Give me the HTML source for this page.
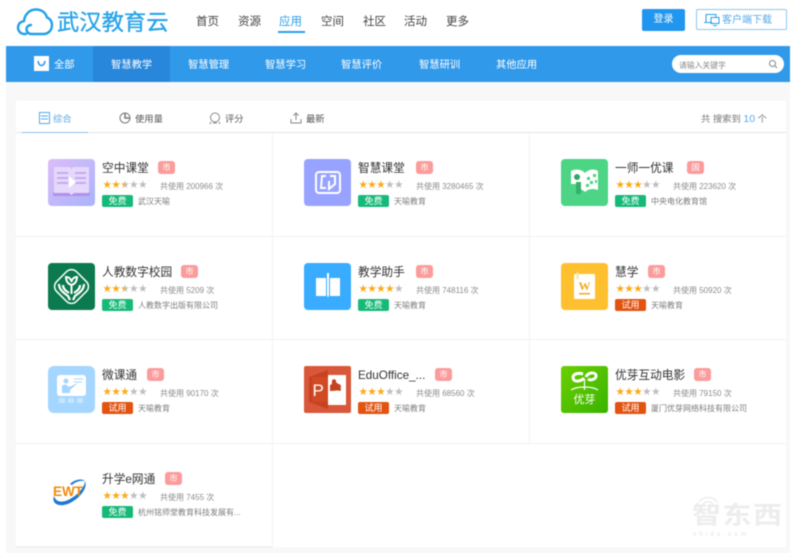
<!DOCTYPE html>
<html lang="zh"><head><meta charset="utf-8"><title>武汉教育云</title>
<style>
*{box-sizing:border-box}
html,body{margin:0;padding:0;width:800px;height:553px;overflow:hidden;background:#fff}
body{font-family:"Liberation Sans","Noto Sans CJK SC",sans-serif}
#w{position:absolute;left:0;top:0;width:800px;height:553px;overflow:hidden;filter:blur(.5px)}
.a{position:absolute;white-space:nowrap}
.n{top:15px;font-size:11.5px;line-height:15px;color:#444}
.b{top:58px;font-size:10.3px;line-height:15px;color:#fff}
.t{top:112px;font-size:9.3px;line-height:14px;color:#555}
.c{position:absolute;width:220px;height:50px}
.i{position:absolute;left:0;top:0;width:47px;height:47px;border-radius:4px;overflow:hidden}
.h{position:absolute;left:54px;top:2px;font-size:11.7px;line-height:16px;color:#333;white-space:nowrap}
.g{position:absolute;top:2px;width:17px;height:13px;border-radius:3px;background:#fb9c9c;color:#fff;font-size:8px;line-height:13px;text-align:center}
.s{position:absolute;left:54.500px;top:21px;font-size:10.500px;line-height:11px;width:50px;height:11px;white-space:nowrap}
.s i{display:inline-block;width:8.900px;font-style:normal;color:#bdbdbd;font-family:"DejaVu Sans",sans-serif;text-align:center}
.s i.o{color:#fba914}
.s i.q{background:linear-gradient(90deg,#fba914 50%,#bdbdbd 50%);-webkit-background-clip:text;background-clip:text;color:transparent}
.u{position:absolute;left:112px;top:22px;font-size:8px;line-height:11px;color:#8c8c8c;white-space:nowrap}
.p{position:absolute;left:54px;top:36px;width:31px;height:12px;border-radius:2px;background:#17b978;color:#fff;font-size:9px;line-height:12px;text-align:center}
.p.r{background:#e2530f}
.m{position:absolute;left:90px;top:37px;font-size:8px;line-height:11px;color:#7c7c7c;white-space:nowrap}
svg{display:block}
</style></head><body><div id="w">

<!-- header -->
<svg class="a" style="left:16px;top:7px" width="38" height="29" viewBox="0 0 38 29"><path d="M10 27H8.500C4.500 27 2 24 2 20.500S4.500 14.500 8 14.200C8.500 7.500 13.500 2.500 20 2.500C25.500 2.500 29.500 5.500 31 10.500C34 11.500 36 14.500 36 18C36 23 32.500 27 27.500 27H15.500C12.500 27 10.500 24.800 10.500 22.300S12.500 18 15 18" fill="none" stroke="#21a1e8" stroke-width="2.400" stroke-linecap="round" stroke-linejoin="round"/></svg>
<div class="a" style="left:57px;top:10px;font-size:22.300px;line-height:26px;color:#27a4e8;-webkit-text-stroke:.35px #27a4e8">武汉教育云</div>
<div class="a n" style="left:196px">首页</div><div class="a n" style="left:238px">资源</div>
<div class="a n" style="left:279px;color:#2b9ee8">应用</div><div class="a" style="left:278px;top:31px;width:27px;height:2px;background:#2b9ee8"></div>
<div class="a n" style="left:321px">空间</div><div class="a n" style="left:363px">社区</div>
<div class="a n" style="left:404px">活动</div><div class="a n" style="left:446px">更多</div>
<div class="a" style="left:642px;top:9px;width:43px;height:22px;background:#2196ee;border-radius:2px;color:#fff;font-size:10px;line-height:22px;text-align:center">登录</div>
<div class="a" style="left:696px;top:9px;width:91px;height:21px;border:1px solid #8fc7f2;border-radius:2px"></div>
<svg class="a" style="left:703px;top:13px" width="17" height="13" viewBox="0 0 17 13" fill="none" stroke="#2b9ee8" stroke-width="1"><path d="M3 9V1.500H13V4M1 9.500H9M8 4.500H16V10.500H8ZM10 12.500H14"/></svg>
<div class="a" style="left:722px;top:14px;font-size:10px;line-height:14px;color:#5aa9e6">客户端下载</div>

<!-- grey bg + blue bar -->
<div class="a" style="left:6px;top:82px;width:784px;height:471px;background:#f8f8f8"></div>
<div class="a" style="left:6px;top:46px;width:784px;height:36px;background:#3199ea"></div>
<div class="a" style="left:93px;top:46px;width:77px;height:36px;background:#2887db"></div>
<svg class="a" style="left:34px;top:56px" width="15" height="15" viewBox="0 0 15 15"><rect width="15" height="15" fill="#fff"/><path d="M4 5C4.500 8 6 9.500 7.500 9.500S10.500 8 11 5" fill="none" stroke="#3199ea" stroke-width="1.600"/></svg>
<div class="a b" style="left:54px">全部</div><div class="a b" style="left:111px">智慧教学</div>
<div class="a b" style="left:188px">智慧管理</div><div class="a b" style="left:265px">智慧学习</div>
<div class="a b" style="left:341px">智慧评价</div><div class="a b" style="left:419px">智慧研训</div>
<div class="a b" style="left:496px">其他应用</div>
<div class="a" style="left:672px;top:55px;width:112px;height:18px;background:#fff;border-radius:9px"></div>
<div class="a" style="left:679px;top:60px;font-size:7.800px;line-height:11px;color:#888">请输入关键字</div>
<svg class="a" style="left:768px;top:59px" width="10" height="10" viewBox="0 0 10 10" fill="none" stroke="#888" stroke-width="1"><circle cx="4.500" cy="4.500" r="3"/><path d="M7 7L9 9"/></svg>

<!-- main panel -->
<div class="a" style="left:16px;top:101px;width:770px;height:446px;background:#fff"></div>
<div class="a" style="left:16px;top:132px;width:770px;height:1px;background:#e4e4e4"></div>
<div class="a" style="left:22px;top:132px;width:66px;height:1px;background:#8cc0ea"></div>
<svg class="a" style="left:39px;top:112px" width="11" height="12" viewBox="0 0 11 12" fill="none" stroke="#5aa9e6"><rect x=".5" y=".5" width="10" height="11"/><path d="M2 4H9M2 7H9"/></svg>
<div class="a t" style="left:53px;color:#5aa9e6">综合</div>
<svg class="a" style="left:119px;top:112px" width="12" height="12" viewBox="0 0 12 12" fill="none" stroke="#777"><circle cx="6" cy="6" r="5"/><path d="M6 1V6H11" stroke-width="1.500"/></svg>
<div class="a t" style="left:135px">使用量</div>
<svg class="a" style="left:209px;top:112px" width="12" height="13" viewBox="0 0 12 13" fill="none" stroke="#888"><circle cx="6" cy="5.500" r="4.500"/><path d="M2 10L1 12M10 10L11 12M4 11H8"/></svg>
<div class="a t" style="left:225px">评分</div>
<svg class="a" style="left:290px;top:112px" width="12" height="12" viewBox="0 0 12 12" fill="none" stroke="#888"><path d="M1 7V11H11V7M6 8V1M3.500 3.500L6 1L8.500 3.500"/></svg>
<div class="a t" style="left:306px">最新</div>
<div class="a t" style="left:701px;color:#777">共 搜索到 <span style="color:#5aa9e6;font-size:10.500px">10</span> 个</div>

<!-- grid lines -->
<div class="a" style="left:16px;top:236px;width:770px;height:1px;background:#f1f1f1"></div>
<div class="a" style="left:16px;top:339px;width:770px;height:1px;background:#f1f1f1"></div>
<div class="a" style="left:16px;top:443px;width:770px;height:1px;background:#f1f1f1"></div>
<div class="a" style="left:16px;top:546px;width:256px;height:2px;background:#f0f0f0"></div>
<div class="a" style="left:272px;top:133px;width:1px;height:414px;background:#f3f3f3"></div>
<div class="a" style="left:529px;top:133px;width:1px;height:311px;background:#f3f3f3"></div>

<!-- Row 1 -->
<div class="c" style="left:48px;top:159px">
<div class="i" style="background:linear-gradient(135deg,#dcbdf8,#a8b4fa)"><svg width="47" height="47" viewBox="0 0 47 47"><path d="M5 37H42V33H5Z" fill="#b190ee"/><path d="M6 8H22L23.500 10L25 8H41V34H26L23.500 36L21 34H6Z" fill="#e6d8fb"/><path d="M9 14H20M9 19H20M9 24H20M27 14H38M27 19H38M27 24H38" stroke="#c3aaf2" stroke-width="2"/><path d="M21 17L28 23L21 29Z" fill="#fff"/></svg></div>
<div class="h">空中课堂</div><div class="g" style="left:110px">市</div>
<div class="s"><i class="o">★</i><i class="o">★</i><i class="q">★</i><i>★</i><i>★</i></div>
<div class="u">共使用 200966 次</div><div class="p">免费</div><div class="m">武汉天喻</div></div>

<div class="c" style="left:304px;top:159px">
<div class="i" style="background:#98a3ff"><svg width="47" height="47" viewBox="0 0 47 47" fill="none" stroke="#fff" stroke-width="2"><rect x="12" y="13" width="24" height="21" rx="3"/><path d="M22 17H18L17 29H22M26 17H31V25L25 30V22"/></svg></div>
<div class="h">智慧课堂</div><div class="g" style="left:112px">市</div>
<div class="s"><i class="o">★</i><i class="o">★</i><i class="o">★</i><i>★</i><i>★</i></div>
<div class="u">共使用 3280465 次</div><div class="p">免费</div><div class="m">天喻教育</div></div>

<div class="c" style="left:561px;top:159px">
<div class="i" style="background:#4dd585"><svg width="47" height="47" viewBox="0 0 47 47"><path d="M10 12C16 9 21 11 24 14C27 11 32 9 37 12V31C32 29 27 30 24 33C22 31 20 30 17 30V25H10Z" fill="#fff"/><circle cx="16" cy="18" r="3" fill="#30a868"/><path d="M15 23H20V35H15Z" fill="#35b06d"/><path d="M26 18H29V21H26ZM32 15H35V18H32ZM29 22H32V25H29ZM34 21H36V24H34ZM25 25H28V28H25Z" fill="#4dd585"/></svg></div>
<div class="h">一师一优课</div><div class="g" style="left:126px">国</div>
<div class="s"><i class="o">★</i><i class="o">★</i><i class="o">★</i><i>★</i><i>★</i></div>
<div class="u">共使用 223620 次</div><div class="p">免费</div><div class="m">中央电化教育馆</div></div>

<!-- Row 2 -->
<div class="c" style="left:48px;top:263px">
<div class="i" style="background:#0b7a4e"><svg width="47" height="47" viewBox="0 0 47 47" fill="none" stroke="#fff"><rect x="9.500" y="9.500" width="28" height="28" rx="7" transform="rotate(45 23.500 23.500)" stroke-width="1.500"/><path d="M23.500 22C20 21 18 18 18 14C21 14 23 16 23.500 19C24 16 26 14 29 14C29 18 27 21 23.500 22ZM23.500 22V31" stroke-width="2"/><path d="M11 21C11 27 16 30 20 33L22 37M36 21C36 27 31 30 27 33L25 37M15 22C15 26 18 28 21 30M32 22C32 26 29 28 26 30" stroke-width="2.200"/></svg></div>
<div class="h">人教数字校园</div><div class="g" style="left:133px">市</div>
<div class="s"><i class="o">★</i><i class="o">★</i><i class="q">★</i><i>★</i><i>★</i></div>
<div class="u">共使用 5209 次</div><div class="p">免费</div><div class="m">人教数字出版有限公司</div></div>

<div class="c" style="left:304px;top:263px">
<div class="i" style="background:#39acff"><svg width="47" height="47" viewBox="0 0 47 47"><path d="M12 15H22V33H12ZM26 15H36V33H26Z" fill="#fff"/><path d="M23 10H25V32L24 35L23 32Z" fill="#fff"/></svg></div>
<div class="h">教学助手</div><div class="g" style="left:112px">市</div>
<div class="s"><i class="o">★</i><i class="o">★</i><i class="o">★</i><i class="o">★</i><i>★</i></div>
<div class="u">共使用 748116 次</div><div class="p">免费</div><div class="m">天喻教育</div></div>

<div class="c" style="left:561px;top:263px">
<div class="i" style="background:#fec02f"><svg width="47" height="47" viewBox="0 0 47 47"><rect x="13" y="11" width="21" height="25" rx="1" fill="#fff"/><rect x="15.500" y="9" width="2" height="7" fill="#fde39c"/><text x="23.500" y="27" text-anchor="middle" font-family="Liberation Serif,serif" font-weight="700" font-size="12" fill="#f2a91c">W</text><rect x="18" y="30" width="11" height="1.500" fill="#f2a91c"/></svg></div>
<div class="h">慧学</div><div class="g" style="left:87px">市</div>
<div class="s"><i class="o">★</i><i class="o">★</i><i class="o">★</i><i>★</i><i>★</i></div>
<div class="u">共使用 50920 次</div><div class="p r">试用</div><div class="m">天喻教育</div></div>

<!-- Row 3 -->
<div class="c" style="left:48px;top:366px">
<div class="i" style="background:#a5d6ff;border-radius:6px"><svg width="47" height="47" viewBox="0 0 47 47"><rect x="9" y="9" width="29" height="21" rx="3" fill="#fff"/><circle cx="18" cy="15" r="2.500" fill="#a5d6ff"/><path d="M14 27V21C14 19 16 18.500 18 18.500L21 21L30 17L22 24V27Z" fill="#a5d6ff"/><path d="M26 13H35M26 16H34" stroke="#a5d6ff"/><rect x="11" y="32" width="6" height="5" rx="1" fill="#c6e5ff"/><rect x="20" y="32" width="6" height="5" rx="1" fill="#c6e5ff"/><rect x="29" y="32" width="6" height="5" rx="1" fill="#c6e5ff"/></svg></div>
<div class="h">微课通</div><div class="g" style="left:99px">市</div>
<div class="s"><i class="o">★</i><i class="o">★</i><i class="o">★</i><i>★</i><i>★</i></div>
<div class="u">共使用 90170 次</div><div class="p r">试用</div><div class="m">天喻教育</div></div>

<div class="c" style="left:304px;top:366px">
<div class="i" style="background:#d9573a;border-radius:2px"><svg width="47" height="47" viewBox="0 0 47 47"><path d="M5 11L24 4V43L5 36Z" fill="#c6431f"/><rect x="24" y="9" width="18" height="30" fill="#fff"/><path d="M8 11H24V36H8Z" fill="#d04a25"/><text x="8.500" y="30" font-family="Liberation Sans,sans-serif" font-size="17" fill="#fff">P</text><path d="M26 19C28 19 28 17 28 15C28 12 33 13 32 16C33 18 37 18 37 20C36 22 38 24 36 25C33 24 32 25 27 25H26Z" fill="#c6431f"/></svg></div>
<div class="h">EduOffice_...</div><div class="g" style="left:131px">市</div>
<div class="s"><i class="o">★</i><i class="o">★</i><i class="o">★</i><i>★</i><i>★</i></div>
<div class="u">共使用 68560 次</div><div class="p r">试用</div><div class="m">天喻教育</div></div>

<div class="c" style="left:561px;top:366px">
<div class="i" style="background:linear-gradient(135deg,#6ccf00,#38b400);border-radius:3px"><svg width="47" height="47" viewBox="0 0 47 47"><path d="M22 8C14 6 10 10 13 14C15 16 21 15 23 12M25 11C27 6 34 6 35 9C36 13 30 15 27 13" fill="none" stroke="#fff" stroke-width="3"/><path d="M23.500 13V24M10 24C16 20 31 20 37 24" fill="none" stroke="#fff" stroke-width="1.200"/><text x="23.500" y="37" text-anchor="middle" font-family="Noto Sans CJK SC,sans-serif" font-size="11" fill="#fff">优芽</text></svg></div>
<div class="h">优芽互动电影</div><div class="g" style="left:133px">市</div>
<div class="s"><i class="o">★</i><i class="o">★</i><i class="o">★</i><i>★</i><i>★</i></div>
<div class="u">共使用 79150 次</div><div class="p r">试用</div><div class="m">厦门优芽网络科技有限公司</div></div>

<!-- Row 4 -->
<div class="c" style="left:48px;top:470px">
<div class="i" style="background:#fff"><svg width="47" height="47" viewBox="0 0 47 47"><path d="M6 26C3 34 12 38 22 33C32 28 40 18 37 11C37 17 29 26 20 30C13 33 8 32 6 26Z" fill="#1f78d1"/><path d="M22 14C26 10 33 8 37 11C32 10 27 12 24 15Z" fill="#1f78d1"/><text x="5" y="26" font-family="Liberation Sans,sans-serif" font-weight="700" font-size="13.500" fill="#f28a0c">EWT</text></svg></div>
<div class="h">升学e网通</div><div class="g" style="left:117px">市</div>
<div class="s"><i class="o">★</i><i class="o">★</i><i class="o">★</i><i>★</i><i>★</i></div>
<div class="u">共使用 7455 次</div><div class="p">免费</div><div class="m">杭州铭师堂教育科技发展有...</div></div>

<!-- watermark -->
<div class="a" style="left:692px;top:503px;font-size:29px;line-height:30px;letter-spacing:1.500px;color:#ededed;font-weight:700;width:92px;overflow:hidden;transform-origin:left top;transform:scaleY(.85)">智东西</div>
<svg class="a" style="left:697px;top:494px" width="22" height="11" viewBox="0 0 22 11" fill="none" stroke="#ededed" stroke-width="1.500"><path d="M2 8C6 2 16 2 20 8M6 10C9 7 13 7 16 10"/></svg>
<div class="a" style="left:693px;top:530px;font-size:6.500px;line-height:9px;letter-spacing:3px;color:#e2e2e2">zhidx.com</div>
</div></body></html>
